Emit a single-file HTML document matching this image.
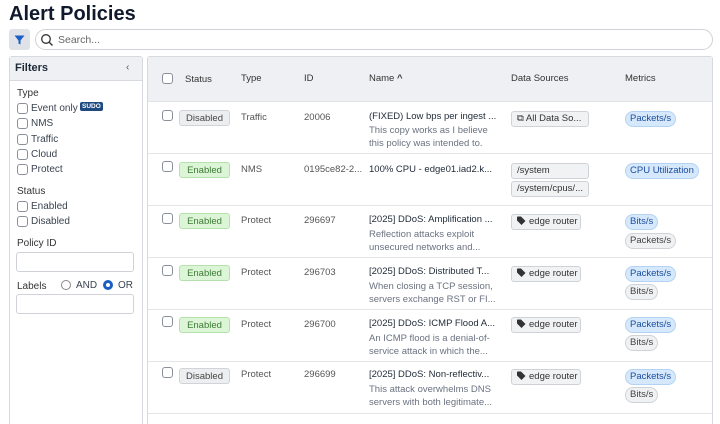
<!DOCTYPE html><html><head><style>
*{box-sizing:border-box;margin:0;padding:0}
html,body{width:720px;height:424px;overflow:hidden}
body{background:#fff;font-family:"Liberation Sans",sans-serif;color:#1f2a37;position:relative}
.a{position:absolute;white-space:nowrap}
.cb{position:absolute;width:11px;height:11px;border:1px solid #8a9099;border-radius:3px;background:#fff}
.fl{font-size:10px;color:#3a4350;margin-top:1px}
.badge{position:absolute;left:179px;width:51px;height:16px;border-radius:3px;font-size:9.5px;text-align:center;line-height:15px}
.dis{background:#eceef0;border:1px solid #d0d4d8;color:#444}
.en{background:#dcf5d6;border:1px solid #b5e2aa;color:#3d7a36}
.t{font-size:9.5px;color:#555}
.nm{font-size:9.5px;color:#1f2a37}
.sub{font-size:9.5px;color:#6b7280;line-height:13px}
.ds{position:absolute;white-space:nowrap;left:511px;height:16px;border:1px solid #cfd3d8;background:#f1f2f4;border-radius:3px;font-size:9.5px;line-height:14px;padding:0 5px;color:#333}
.m{position:absolute;white-space:nowrap;height:16px;border-radius:8px;font-size:9.5px;line-height:14px;padding:0 4px}
.mb{background:#d6e8fb;border:1px solid #b4d2f3;color:#1c4d9e}
.mg{background:#f0f1f3;border:1px solid #cfd3d8;color:#444}
.row{position:absolute;left:148px;width:564px;border-top:1px solid #e3e5e8}
.tag{display:inline-block;vertical-align:-1px;margin-right:3px}
</style></head><body>
<div class="a" style="left:9px;top:3px;font-size:20px;font-weight:bold;color:#111a2c">Alert Policies</div>
<div class="a" style="left:9px;top:29px;width:21px;height:21px;background:#dfe3e8;border-radius:3px"><svg width="21" height="21"><path d="M5.5 6.5h10l-4 5v4l-2 -1v-3z" fill="#1c5fc4"/></svg></div>
<div class="a" style="left:35px;top:29px;width:678px;height:21px;border:1px solid #cfd3d8;border-radius:11px"></div>
<svg class="a" style="left:40px;top:33px" width="14" height="14"><circle cx="6" cy="6" r="4.3" stroke="#333" stroke-width="1.3" fill="none"/><path d="M9.2 9.2l3.3 3.3" stroke="#333" stroke-width="1.4"/></svg>
<div class="a" style="left:58px;top:34px;font-size:10.5px;color:#666">Search...</div>
<div class="a" style="left:9px;top:56px;width:134px;height:380px;border:1px solid #d6d9dd;border-radius:3px"></div>
<div class="a" style="left:10px;top:57px;width:132px;height:24px;background:#eef0f3;border-bottom:1px solid #d6d9dd"></div>
<div class="a" style="left:15px;top:62px;font-size:11px;font-weight:bold">Filters</div>
<div class="a" style="left:126px;top:62px;font-size:10px;color:#555">‹</div>
<div class="a fl" style="left:17px;top:87px;color:#333">Type</div>
<div class="cb" style="left:17px;top:103px"></div><div class="a fl" style="left:31px;top:102px">Event only</div>
<div class="a" style="left:80px;top:102px;background:#1e4a7f;color:#fff;font-size:6.5px;font-weight:bold;padding:1px 2px;border-radius:2px">SUDO</div>
<div class="cb" style="left:17px;top:118px"></div><div class="a fl" style="left:31px;top:117px">NMS</div>
<div class="cb" style="left:17px;top:134px"></div><div class="a fl" style="left:31px;top:133px">Traffic</div>
<div class="cb" style="left:17px;top:149px"></div><div class="a fl" style="left:31px;top:148px">Cloud</div>
<div class="cb" style="left:17px;top:164px"></div><div class="a fl" style="left:31px;top:163px">Protect</div>
<div class="a fl" style="left:17px;top:185px;color:#333">Status</div>
<div class="cb" style="left:17px;top:201px"></div><div class="a fl" style="left:31px;top:200px">Enabled</div>
<div class="cb" style="left:17px;top:216px"></div><div class="a fl" style="left:31px;top:215px">Disabled</div>
<div class="a fl" style="left:17px;top:237px;color:#333">Policy ID</div>
<div class="a" style="left:16px;top:252px;width:118px;height:20px;border:1px solid #cfd3d8;border-radius:3px"></div>
<div class="a fl" style="left:17px;top:280px;color:#333">Labels</div>
<div class="a" style="left:61px;top:280px;width:10px;height:10px;border:1px solid #888;border-radius:50%"></div>
<div class="a fl" style="left:76px;top:279px">AND</div>
<div class="a" style="left:103px;top:280px;width:10px;height:10px;border:3px solid #1c5fc4;border-radius:50%"></div>
<div class="a fl" style="left:118px;top:279px">OR</div>
<div class="a" style="left:16px;top:294px;width:118px;height:20px;border:1px solid #cfd3d8;border-radius:3px"></div>
<div class="a" style="left:147px;top:56px;width:566px;height:380px;border:1px solid #d6d9dd;border-radius:3px"></div>
<div class="a" style="left:148px;top:57px;width:564px;height:44px;background:#eef0f3"></div>
<div class="cb" style="left:162px;top:73px"></div>
<div class="a t" style="left:185px;top:74px;color:#333">Status</div>
<div class="a t" style="left:241px;top:73px;color:#333">Type</div>
<div class="a t" style="left:304px;top:73px;color:#333">ID</div>
<div class="a t" style="left:369px;top:73px;color:#333">Name <b>^</b></div>
<div class="a t" style="left:511px;top:73px;color:#333">Data Sources</div>
<div class="a t" style="left:625px;top:73px;color:#333">Metrics</div>

<div class="row" style="top:101px"></div><div class="row" style="top:153px"></div><div class="row" style="top:205px"></div><div class="row" style="top:257px"></div><div class="row" style="top:309px"></div><div class="row" style="top:361px"></div><div class="row" style="top:413px"></div>

<div class="cb" style="left:162px;top:110px"></div><div class="badge dis" style="top:110px">Disabled</div>
<div class="a t" style="left:241px;top:112px">Traffic</div><div class="a t" style="left:304px;top:112px">20006</div>
<div class="a nm" style="left:369px;top:111px">(FIXED) Low bps per ingest ...</div>
<div class="a sub" style="left:369px;top:124px">This copy works as I believe<br>this policy was intended to.</div>
<div class="ds" style="top:111px;width:78px">⧉ All Data So...</div>
<div class="m mb" style="left:625px;top:111px">Packets/s</div>

<div class="cb" style="left:162px;top:161px"></div><div class="badge en" style="top:162px">Enabled</div>
<div class="a t" style="left:241px;top:164px">NMS</div><div class="a t" style="left:304px;top:164px">0195ce82-2...</div>
<div class="a nm" style="left:369px;top:164px">100% CPU - edge01.iad2.k...</div>
<div class="ds" style="top:163px;width:78px">/system</div><div class="ds" style="top:181px;width:78px">/system/cpus/...</div>
<div class="m mb" style="left:625px;top:163px">CPU Utilization</div>

<div class="cb" style="left:162px;top:213px"></div><div class="badge en" style="top:213px">Enabled</div>
<div class="a t" style="left:241px;top:215px">Protect</div><div class="a t" style="left:304px;top:215px">296697</div>
<div class="a nm" style="left:369px;top:214px">[2025] DDoS: Amplification ...</div>
<div class="a sub" style="left:369px;top:228px">Reflection attacks exploit<br>unsecured networks and...</div>
<div class="ds" style="top:214px;width:70px"><svg class="tag" width="9" height="9"><path d="M0 1v3.5l4.5 4.5 4-4L4 0.5H0.5z" fill="#333"/></svg>edge router</div>
<div class="m mb" style="left:625px;top:214px">Bits/s</div><div class="m mg" style="left:625px;top:233px">Packets/s</div>

<div class="cb" style="left:162px;top:265px"></div><div class="badge en" style="top:265px">Enabled</div>
<div class="a t" style="left:241px;top:267px">Protect</div><div class="a t" style="left:304px;top:267px">296703</div>
<div class="a nm" style="left:369px;top:266px">[2025] DDoS: Distributed T...</div>
<div class="a sub" style="left:369px;top:280px">When closing a TCP session,<br>servers exchange RST or FI...</div>
<div class="ds" style="top:266px;width:70px"><svg class="tag" width="9" height="9"><path d="M0 1v3.5l4.5 4.5 4-4L4 0.5H0.5z" fill="#333"/></svg>edge router</div>
<div class="m mb" style="left:625px;top:266px">Packets/s</div><div class="m mg" style="left:625px;top:284px">Bits/s</div>

<div class="cb" style="left:162px;top:316px"></div><div class="badge en" style="top:317px">Enabled</div>
<div class="a t" style="left:241px;top:319px">Protect</div><div class="a t" style="left:304px;top:319px">296700</div>
<div class="a nm" style="left:369px;top:318px">[2025] DDoS: ICMP Flood A...</div>
<div class="a sub" style="left:369px;top:332px">An ICMP flood is a denial-of-<br>service attack in which the...</div>
<div class="ds" style="top:317px;width:70px"><svg class="tag" width="9" height="9"><path d="M0 1v3.5l4.5 4.5 4-4L4 0.5H0.5z" fill="#333"/></svg>edge router</div>
<div class="m mb" style="left:625px;top:317px">Packets/s</div><div class="m mg" style="left:625px;top:335px">Bits/s</div>

<div class="cb" style="left:162px;top:367px"></div><div class="badge dis" style="top:368px">Disabled</div>
<div class="a t" style="left:241px;top:369px">Protect</div><div class="a t" style="left:304px;top:369px">296699</div>
<div class="a nm" style="left:369px;top:369px">[2025] DDoS: Non-reflectiv...</div>
<div class="a sub" style="left:369px;top:383px">This attack overwhelms DNS<br>servers with both legitimate...</div>
<div class="ds" style="top:369px;width:70px"><svg class="tag" width="9" height="9"><path d="M0 1v3.5l4.5 4.5 4-4L4 0.5H0.5z" fill="#333"/></svg>edge router</div>
<div class="m mb" style="left:625px;top:369px">Packets/s</div><div class="m mg" style="left:625px;top:387px">Bits/s</div>
</body></html>
